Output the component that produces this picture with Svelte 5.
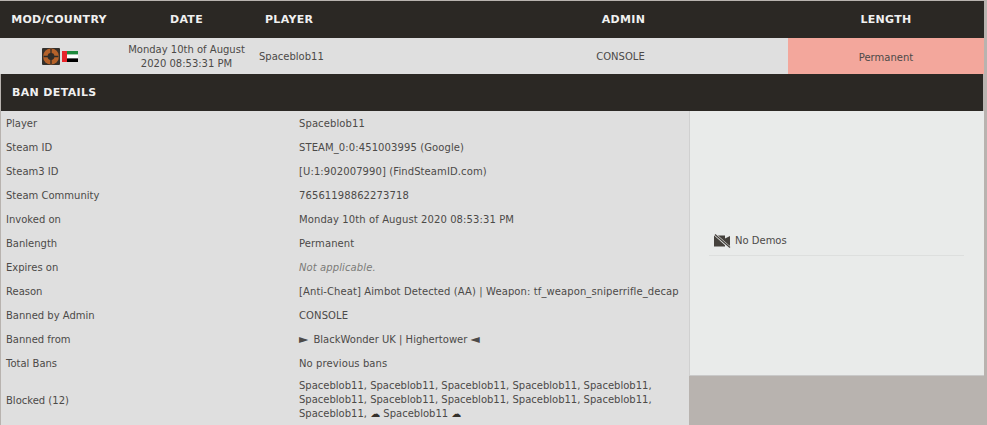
<script>
  const details = [
    ['Player', 'Spaceblob11'],
    ['Steam ID', 'STEAM_0:0:451003995 (Google)'],
    ['Steam3 ID', '[U:1:902007990] (FindSteamID.com)'],
    ['Steam Community', '76561198862273718'],
    ['Invoked on', 'Monday 10th of August 2020 08:53:31 PM'],
    ['Banlength', 'Permanent'],
    ['Expires on', 'Not applicable.', true],
    ['Reason', '[Anti-Cheat] Aimbot Detected (AA) | Weapon: tf_weapon_sniperrifle_decap'],
    ['Banned by Admin', 'CONSOLE']
  ];
</script>

<div class="page">
  <div class="cols head">
    <div class="c">MOD/COUNTRY</div>
    <div class="c">DATE</div>
    <div class="player-head">PLAYER</div>
    <div class="c admin-head">ADMIN</div>
    <div class="c">LENGTH</div>
  </div>

  <div class="cols row">
    <div class="c icons">
      <svg width="18" height="17" viewBox="0 0 18 17">
        <rect width="18" height="17" rx="1" fill="#34312d" />
        <circle cx="9" cy="8.5" r="8" fill="#b5622a" />
        <circle cx="9" cy="8.5" r="3.4" fill="#2f2c28" />
        <path d="M9 1v15M1.5 8.5h15" stroke="#2f2c28" stroke-width="1.3" />
      </svg>
      <svg width="16" height="11" viewBox="0 0 16 11">
        <rect width="16" height="3.6" fill="#1e8a3c" />
        <rect y="3.6" width="16" height="3.8" fill="#fff" />
        <rect y="7.4" width="16" height="3.6" fill="#000" />
        <rect width="5" height="11" fill="#e8252b" />
      </svg>
    </div>
    <div class="c date">Monday 10th of August 2020 08:53:31 PM</div>
    <div class="player">Spaceblob11</div>
    <div class="c console">CONSOLE</div>
    <div class="perm">Permanent</div>
  </div>

  <div class="title">BAN DETAILS</div>

  <div class="body">
    <div class="table">
      {#each details as [label, value, muted]}
        <div class="line">
          <div class="label">{label}</div>
          <div class="value" class:muted>{value}</div>
        </div>
      {/each}
      <div class="line">
        <div class="label">Banned from</div>
        <div class="value servers"><span class="sym first">►</span> BlackWonder UK | Highertower <span class="sym">◄</span></div>
      </div>
      <div class="line">
        <div class="label">Total Bans</div>
        <div class="value">No previous bans</div>
      </div>
      <div class="line blocked">
        <div class="label">Blocked (12)</div>
        <div class="value">Spaceblob11, Spaceblob11, Spaceblob11, Spaceblob11, Spaceblob11, Spaceblob11, Spaceblob11, Spaceblob11, Spaceblob11, Spaceblob11, Spaceblob11, <span class="cloud">☁</span> Spaceblob11 <span class="cloud">☁</span></div>
      </div>
    </div>

    <div class="side">
      <div class="demos">
        <svg width="17" height="14" viewBox="0 0 17 14">
          <path d="M0 1.5h11v3l5-2.5v10l-5-2.5v3H0z" fill="#45413c" />
          <path d="M1 .5l14.5 13" stroke="#e9ebea" stroke-width="2.6" />
          <path d="M1 .5l15 13" stroke="#45413c" stroke-width="1.2" />
        </svg>
        <span>No Demos</span>
      </div>
    </div>
  </div>
</div>

<style>
  :global(body) {
    background: #b8b3af;
    font-family: 'DejaVu Sans', Verdana, sans-serif;
    font-size: 10px;
    color: #4c4a48;
  }

  .page {
    width: 984px;
    padding-top: 1px;
  }

  .cols {
    display: grid;
    grid-template-columns: 118px 137px 200px 333px 196px;
    align-items: center;
  }

  .c {
    text-align: center;
  }

  .head {
    height: 37px;
    background: #2b2824;
    color: #f0f0f0;
    font-weight: bold;
    font-size: 11px;
    letter-spacing: 0.3px;
  }

  .player-head {
    padding-left: 10px;
  }

  .admin-head {
    padding-left: 4px;
  }

  .row {
    height: 36px;
    background: #dfdfdf;
  }

  .icons {
    display: flex;
    justify-content: center;
    align-items: center;
    gap: 2px;
    padding-left: 1px;
    padding-top: 1px;
  }

  .date {
    line-height: 14px;
    padding-top: 2px;
  }

  .player {
    padding-left: 4px;
    padding-top: 1px;
  }

  .console {
    padding-top: 1px;
    padding-right: 2px;
  }

  .perm {
    display: flex;
    align-items: center;
    justify-content: center;
    box-sizing: border-box;
    height: 100%;
    padding-top: 2px;
    background: #f3a79c;
  }

  .title {
    height: 37px;
    line-height: 37px;
    padding-left: 11px;
    margin: 0 1px;
    background: #2b2824;
    color: #f0f0f0;
    font-weight: bold;
    font-size: 11px;
    letter-spacing: 0.35px;
  }

  .body {
    display: flex;
    align-items: flex-start;
    margin-left: 1px;
  }

  .table {
    width: 688px;
    background: #dfdfdf;
    flex-shrink: 0;
  }

  .line {
    display: flex;
    align-items: center;
    height: 24px;
  }

  .label {
    width: 298px;
    padding-left: 5px;
    box-sizing: border-box;
    flex-shrink: 0;
  }

  .value {
    white-space: nowrap;
    letter-spacing: 0.1px;
  }

  .servers {
    letter-spacing: 0;
  }

  .sym {
    font-size: 12px;
    line-height: 10px;
  }

  .sym.first {
    margin-right: 2px;
  }

  .cloud {
    display: inline-block;
    line-height: 10px;
    color: #33302c;
  }

  .muted {
    font-style: italic;
    color: #7b7b78;
  }

  .blocked {
    height: 50px;
  }

  .blocked .value {
    white-space: normal;
    width: 370px;
    line-height: 14px;
    letter-spacing: 0;
  }

  .side {
    box-sizing: border-box;
    width: 295px;
    height: 265px;
    background: #e9ebea;
    border-left: 1px solid #d0d0d0;
    border-bottom: 1px solid #c9c9c9;
    display: flex;
    align-items: center;
    padding: 0 20px 0 19px;
  }

  .demos {
    flex: 1;
    display: flex;
    align-items: center;
    gap: 4px;
    box-sizing: border-box;
    height: 29px;
    margin-bottom: 4px;
    padding-left: 5px;
    border-bottom: 1px solid #dddfde;
  }
</style>
